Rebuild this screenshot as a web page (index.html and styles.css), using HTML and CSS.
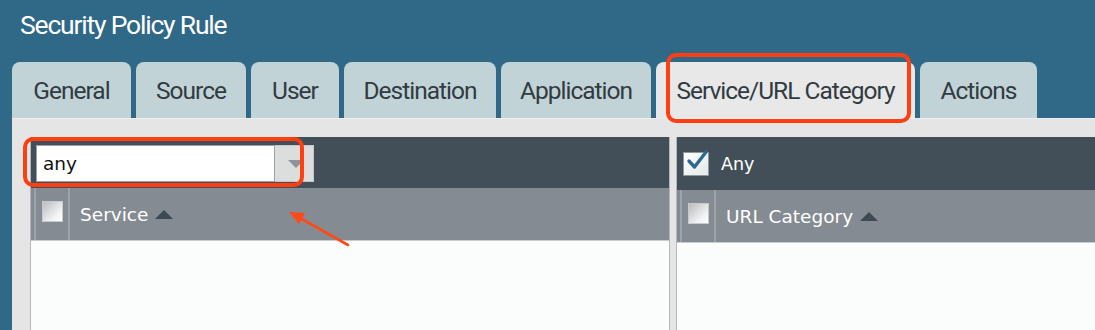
FILE: index.html
```html
<!DOCTYPE html>
<html>
<head>
<meta charset="utf-8">
<title>Security Policy Rule</title>
<link rel="stylesheet" href="styles.css">
</head>
<body>
<div class="page">
  <div class="title">Security Policy Rule</div>
  <div class="tabs">
    <div class="tab w-general">General</div>
    <div class="tab w-source">Source</div>
    <div class="tab w-user">User</div>
    <div class="tab w-dest">Destination</div>
    <div class="tab w-app">Application</div>
    <div class="tab w-service active">Service/URL Category</div>
    <div class="tab w-actions">Actions</div>
  </div>
  <div class="content">
    <div class="panel panel-left">
      <div class="toolbar">
        <div class="select">
          <div class="select-value">any</div>
          <div class="select-btn"><span class="caret"></span></div>
        </div>
      </div>
      <div class="colhead">
        <div class="cell-check"><span class="cbox"></span></div>
        <div class="cell-label">Service <span class="sort"></span></div>
      </div>
      <div class="panel-body"></div>
    </div>
    <div class="panel panel-right">
      <div class="toolbar toolbar-right">
        <span class="cbox-checked">
          <svg width="26" height="24" viewBox="0 0 26 24"><path d="M5 12 L10.5 18 L22 3" fill="none" stroke="#2e6a8c" stroke-width="3.4" stroke-linecap="round" stroke-linejoin="round"/></svg>
        </span>
        <span class="any-label">Any</span>
      </div>
      <div class="colhead">
        <div class="cell-check"><span class="cbox"></span></div>
        <div class="cell-label">URL Category <span class="sort"></span></div>
      </div>
      <div class="panel-body"></div>
    </div>
  </div>

  <div class="mark mark-tab"></div>
  <div class="mark mark-select"></div>
  <svg class="arrow" width="1095" height="330" viewBox="0 0 1095 330">
    <line x1="348" y1="245" x2="300" y2="218" stroke="#ff4a17" stroke-width="2.6" stroke-linecap="round"/>
    <polygon points="289,212 305,213 299,224" fill="#ff4a17"/>
  </svg>
</div>
</body>
</html>
```

FILE: styles.css
```css
html, body {
  margin: 0;
  padding: 0;
  height: 100%;
  overflow: hidden;
}
body {
  background: #306887;
  font-family: Roboto, "Liberation Sans", sans-serif;
}
.page {
  position: relative;
  width: 1095px;
  height: 330px;
  display: flex;
  flex-direction: column;
}
.title {
  height: 62px;
  line-height: 49px;
  padding-left: 20px;
  color: #ffffff;
  font-size: 26.5px;
  letter-spacing: -1.2px;
}
.tabs {
  display: flex;
  gap: 5px;
  margin-left: 12px;
  height: 56px;
}
.tab {
  background: #c2d3d8;
  color: #313b42;
  font-size: 24.5px;
  letter-spacing: -1px;
  line-height: 58px;
  text-align: center;
  border-radius: 8px 8px 0 0;
  white-space: nowrap;
  flex-shrink: 0;
}
.w-general { width: 119px; }
.w-source { width: 110px; }
.w-user { width: 88px; }
.w-dest { width: 152px; }
.w-app { width: 150px; }
.w-service { width: 259px; }
.w-actions { width: 117px; }
.tab.active {
  background: #e8e8e8;
}
.content {
  flex: 1;
  margin-left: 12px;
  background: #e5e5e5;
  border-top: 1px solid #eeeeee;
  padding: 18px 0 0 18px;
  display: flex;
  gap: 6px;
  overflow: hidden;
}
.panel {
  display: flex;
  flex-direction: column;
  background: #fbfcfc;
  border-left: 1px solid #b2b7bb;
  border-right: 1px solid #b2b7bb;
  flex-shrink: 0;
}
.panel-left {
  width: 638px;
}
.panel-right {
  width: 500px;
}
.toolbar {
  background: #434f58;
  height: 51px;
  display: flex;
  align-items: center;
  padding-left: 5px;
}
.toolbar-right {
  height: 53px;
  padding-left: 6px;
}
.select {
  display: flex;
  height: 37px;
  margin-top: 2px;
}
.select-value {
  width: 231px;
  background: #ffffff;
  border: 1px solid #9aa1a6;
  font-family: "DejaVu Sans", sans-serif;
  font-size: 18.5px;
  line-height: 35px;
  padding-left: 6px;
  color: #111111;
}
.select-btn {
  width: 38px;
  background: #dcdddd;
  border: 1px solid #c4c7c9;
  border-left: none;
  display: flex;
  align-items: center;
  justify-content: center;
}
.caret {
  width: 0;
  height: 0;
  border-left: 8px solid transparent;
  border-right: 8px solid transparent;
  border-top: 8px solid #8a949a;
  margin-left: 4px;
}
.colhead {
  background: #858b92;
  height: 52px;
  display: flex;
  align-items: stretch;
  border-bottom: 1px solid #c9cdd0;
  padding-left: 3px;
}
.cell-check {
  width: 32px;
  border-left: 2px solid #9ca2a7;
  border-right: 2px solid #9ca2a7;
  display: flex;
  align-items: center;
  justify-content: center;
}
.cbox {
  width: 19px;
  height: 19px;
  border: 1px solid #c8cbcd;
  background: linear-gradient(135deg, #b9bcbf 0%, #f2f2f2 70%, #ffffff 100%);
  margin-bottom: 6px;
}
.cell-label {
  display: flex;
  align-items: center;
  padding-left: 10px;
  color: #ffffff;
  font-family: "DejaVu Sans", sans-serif;
  font-size: 18.5px;
  gap: 7px;
}
.sort {
  width: 0;
  height: 0;
  border-left: 9px solid transparent;
  border-right: 9px solid transparent;
  border-bottom: 9px solid #3e4a53;
}
.panel-body {
  flex: 1;
  background: #fbfcfc;
}
.cbox-checked {
  width: 24px;
  height: 22px;
  background: linear-gradient(135deg, #ffffff 0%, #e4e8ea 100%);
  border: 1px solid #8d979e;
  display: flex;
  align-items: center;
  justify-content: center;
  overflow: visible;
  position: relative;
}
.cbox-checked svg {
  position: absolute;
  left: 0;
  top: -4px;
}
.any-label {
  color: #ffffff;
  font-family: "DejaVu Sans", sans-serif;
  font-size: 17.5px;
  margin-left: 12px;
}
.mark {
  position: absolute;
  border: 4px solid #ff3f12;
  border-radius: 10px;
  box-sizing: border-box;
}
.mark-tab {
  left: 666px;
  top: 53px;
  width: 245px;
  height: 70px;
}
.mark-select {
  left: 23px;
  top: 137px;
  width: 281px;
  height: 50px;
}
.arrow {
  position: absolute;
  left: 0;
  top: 0;
  pointer-events: none;
}
```
